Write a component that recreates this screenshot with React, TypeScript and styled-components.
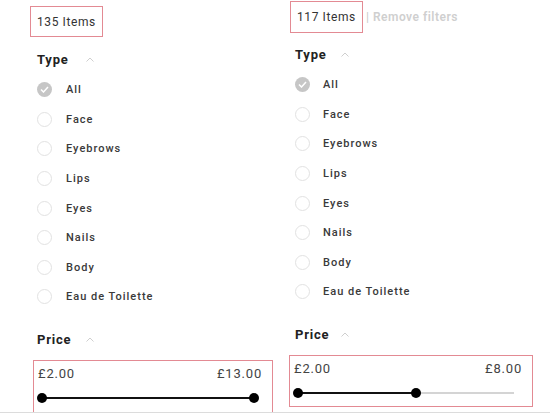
import React from 'react'
import styled, { createGlobalStyle } from 'styled-components'

const GlobalStyle = createGlobalStyle`
    html, body {
        margin: 0;
        padding: 0;
        background: #fff;
    }
    body {
        font-family: Roboto, 'Liberation Sans', Arial, sans-serif;
        color: #333;
    }
`

const Page = styled.div`
    width: 550px;
    height: 412px;
    overflow: hidden;
    border-bottom: 1px solid #dcdcdc;
    display: grid;
    grid-template-columns: 275px 275px;
`

const Column = styled.div<{ $top: number; $left: number }>`
    padding-top: ${(p) => p.$top}px;
    padding-left: ${(p) => p.$left}px;
    display: flex;
    flex-direction: column;
    align-items: flex-start;
    min-width: 0;
`

const Header = styled.div`
    display: flex;
    align-items: center;
`

const ItemsBox = styled.div<{ $shift: number; $height: number }>`
    margin-left: ${(p) => p.$shift}px;
    height: ${(p) => p.$height}px;
    box-sizing: border-box;
    border: 1px solid #e38a93;
    padding: 0 6px;
    display: flex;
    align-items: center;
    font-size: 12px;
    letter-spacing: 0.6px;
    color: #333;
`

const RemoveFilters = styled.span`
    margin-left: 3px;
    font-size: 12px;
    font-weight: 600;
    letter-spacing: 0.5px;
    color: #cfcfcf;
    white-space: nowrap;
`

const Heading = styled.div<{ $gap: number }>`
    margin-top: ${(p) => p.$gap}px;
    display: flex;
    align-items: center;
    height: 16px;
`

const HeadingLabel = styled.span<{ $width: number }>`
    min-width: ${(p) => p.$width}px;
    font-size: 13px;
    font-weight: 700;
    letter-spacing: 0.8px;
    color: #222;
`

const Chevron = () => (
    <svg width="8" height="5" viewBox="0 0 8 5">
        <polyline points="0.5,4.5 4,1 7.5,4.5" fill="none" stroke="#cfcfcf" strokeWidth="1" />
    </svg>
)

const List = styled.div`
    margin-top: 8px;
    display: flex;
    flex-direction: column;
`

const Row = styled.div`
    height: 29.6px;
    display: flex;
    align-items: center;
`

const Radio = styled.span<{ $checked: boolean }>`
    width: 15px;
    height: 15px;
    box-sizing: border-box;
    border-radius: 50%;
    border: ${(p) => (p.$checked ? 'none' : '1.5px solid #e2e2e2')};
    background: ${(p) => (p.$checked ? '#c6c6c6' : '#fff')};
    display: flex;
    align-items: center;
    justify-content: center;
`

const RowLabel = styled.span<{ $indent: number }>`
    margin-left: ${(p) => p.$indent}px;
    font-size: 11px;
    font-weight: 500;
    letter-spacing: 1px;
    color: #3a3a3a;
`

const PriceBox = styled.div<{ $width: number; $shift: number; $bottom: number }>`
    margin-top: 12px;
    margin-left: ${(p) => p.$shift}px;
    width: ${(p) => p.$width}px;
    box-sizing: border-box;
    border: 1px solid #e38a93;
    padding: 5px 10px ${(p) => p.$bottom}px 4px;
`

const Values = styled.div`
    display: flex;
    justify-content: space-between;
    height: 16px;
    line-height: 16px;
    font-size: 13px;
    letter-spacing: 0.8px;
    color: #444;
`

const Slider = styled.div`
    position: relative;
    margin: 6px 8px 0 4px;
    height: 20px;
`

const Track = styled.div`
    position: absolute;
    left: 0;
    right: 0;
    top: 9px;
    height: 2px;
    background: #d4d4d4;
`

const Fill = styled.div`
    position: absolute;
    left: 0;
    top: 9px;
    height: 2px;
    background: #111;
`

const Thumb = styled.div`
    position: absolute;
    top: 5px;
    width: 10px;
    height: 10px;
    margin-left: -5px;
    border-radius: 50%;
    background: #000;
`

const types = ['All', 'Face', 'Eyebrows', 'Lips', 'Eyes', 'Nails', 'Body', 'Eau de Toilette']

type FilterProps = {
    count: number
    removable?: boolean
    min: number
    max: number
    low: number
    high: number
    top: number
    left: number
    boxShift: number
    boxHeight: number
    headGap: number
    labelWidth: number
    indent: number
    priceWidth: number
    priceShift: number
    priceBottom: number
}

const Filters = (p: FilterProps) => {
    const pos = (v: number) => ((v - p.min) / (p.max - p.min)) * 100
    return (
        <Column $top={p.top} $left={p.left}>
            <Header>
                <ItemsBox $shift={p.boxShift} $height={p.boxHeight}>
                    {p.count} Items
                </ItemsBox>
                {p.removable && <RemoveFilters>| Remove filters</RemoveFilters>}
            </Header>
            <Heading $gap={p.headGap}>
                <HeadingLabel $width={p.labelWidth}>Type</HeadingLabel>
                <Chevron />
            </Heading>
            <List>
                {types.map((t, i) => (
                    <Row key={t}>
                        <Radio $checked={i === 0}>
                            {i === 0 && (
                                <svg width="9" height="7" viewBox="0 0 9 7">
                                    <polyline
                                        points="1,3.5 3.5,6 8,1"
                                        fill="none"
                                        stroke="#fff"
                                        strokeWidth="1.5"
                                    />
                                </svg>
                            )}
                        </Radio>
                        <RowLabel $indent={p.indent}>{t}</RowLabel>
                    </Row>
                ))}
            </List>
            <Heading $gap={20}>
                <HeadingLabel $width={p.labelWidth}>Price</HeadingLabel>
                <Chevron />
            </Heading>
            <PriceBox $width={p.priceWidth} $shift={p.priceShift} $bottom={p.priceBottom}>
                <Values>
                    <span>£{p.low.toFixed(2)}</span>
                    <span>£{p.high.toFixed(2)}</span>
                </Values>
                <Slider>
                    <Track />
                    <Fill
                        style={{ left: `${pos(p.low)}%`, width: `${pos(p.high) - pos(p.low)}%` }}
                    />
                    <Thumb style={{ left: `${pos(p.low)}%` }} />
                    <Thumb style={{ left: `${pos(p.high)}%` }} />
                </Slider>
            </PriceBox>
        </Column>
    )
}

export default function App() {
    return (
        <>
            <GlobalStyle />
            <Page>
                <Filters
                    count={135}
                    min={2}
                    max={13}
                    low={2}
                    high={13}
                    top={6}
                    left={37}
                    boxShift={-7}
                    boxHeight={31}
                    headGap={14}
                    labelWidth={49}
                    indent={14}
                    priceWidth={240}
                    priceShift={-4}
                    priceBottom={12}
                />
                <Filters
                    count={117}
                    removable
                    min={2}
                    max={13}
                    low={2}
                    high={8}
                    top={1}
                    left={20}
                    boxShift={-5}
                    boxHeight={32}
                    headGap={13}
                    labelWidth={46}
                    indent={13}
                    priceWidth={244}
                    priceShift={-6}
                    priceBottom={3}
                />
            </Page>
        </>
    )
}
